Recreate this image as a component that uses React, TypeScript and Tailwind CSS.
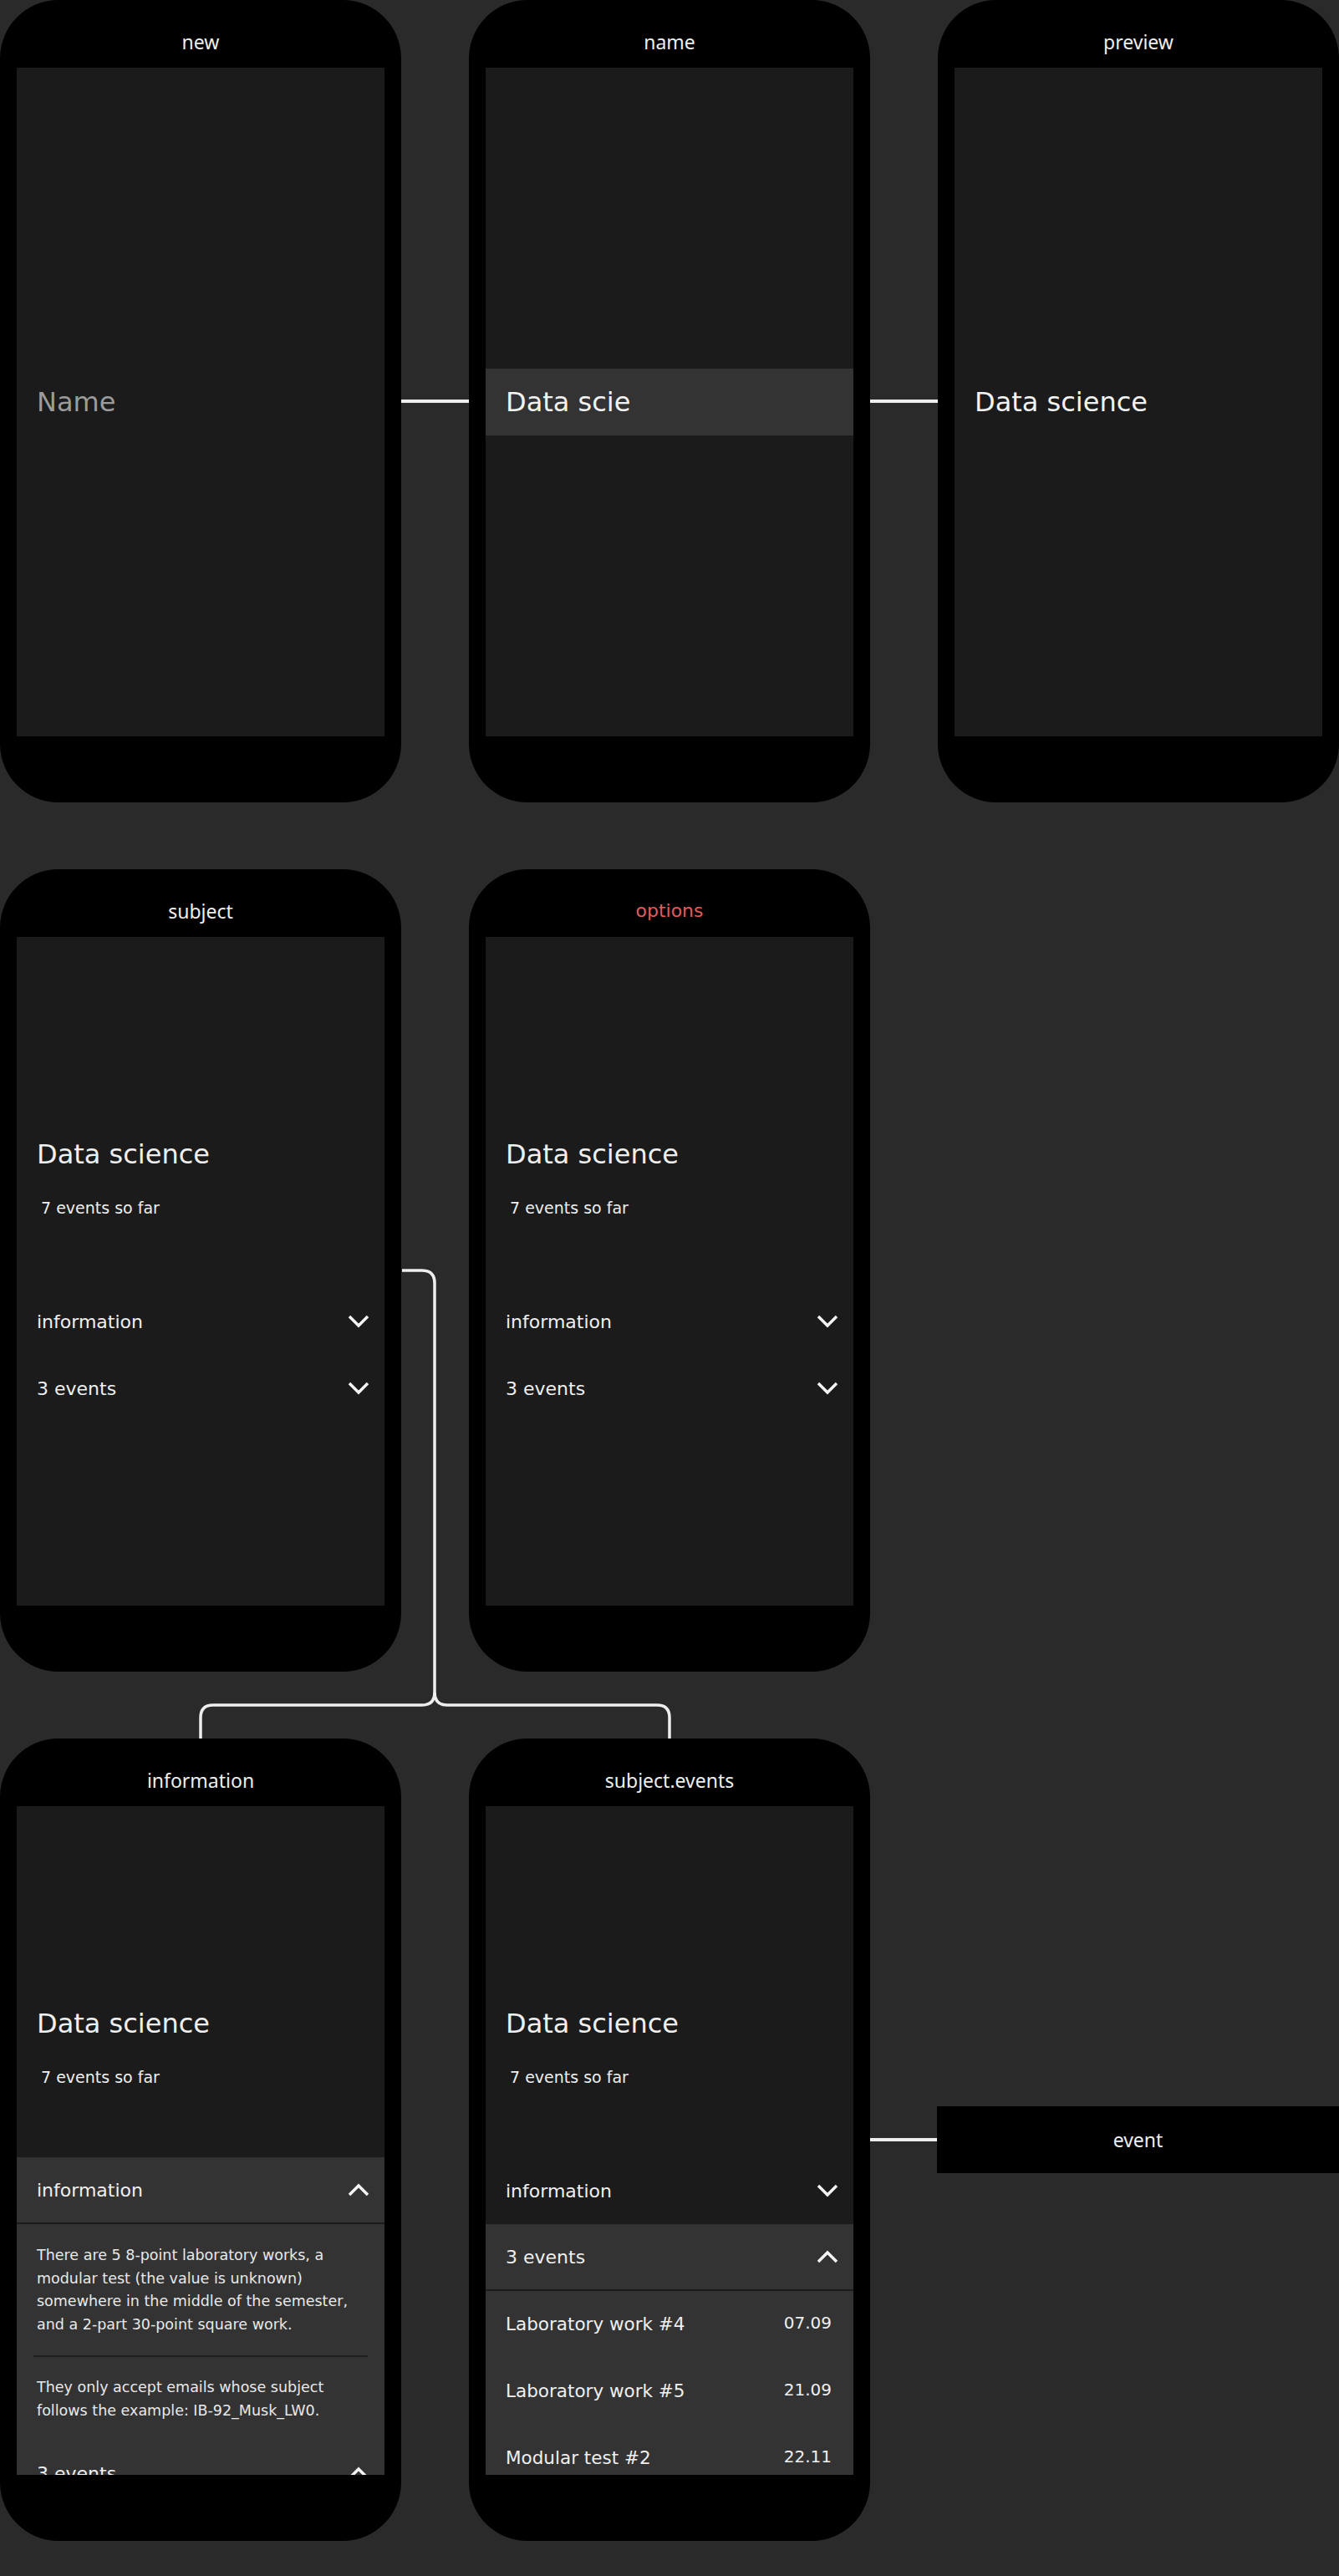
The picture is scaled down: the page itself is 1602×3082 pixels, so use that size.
import type { ReactNode } from "react";

// Montserrat-like content font and a system-like chrome font
const MONT = "font-['DejaVu_Sans','Liberation_Sans',sans-serif]";
const UI = "font-['Noto_Sans','Open_Sans',sans-serif]";

function Chevron({ up = false }: { up?: boolean }) {
  return (
    <svg width="26" height="16" viewBox="0 0 26 16" fill="none" className="shrink-0">
      <polyline
        points={up ? "2,14 13,3 24,14" : "2,2 13,13 24,2"}
        stroke="#f4f4f4"
        strokeWidth="3.5"
      />
    </svg>
  );
}

function Phone({ title, red, children }: { title: string; red?: boolean; children?: ReactNode }) {
  return (
    <div className="flex h-[960px] w-[480px] shrink-0 flex-col rounded-[70px] bg-black">
      {red ? (
        <div className={"h-[81px] pt-[35px] text-center text-[22px] leading-[30px] text-[#e35b5b] " + MONT}>
          {title}
        </div>
      ) : (
        <div className={"h-[81px] pt-[34px] text-center text-[23px] leading-[32px] text-[#eeeeee] " + UI}>
          {title}
        </div>
      )}
      <div className="mx-[20px] h-[800px] overflow-hidden bg-[#1b1b1b]">{children}</div>
    </div>
  );
}

function AccHeader({ label, open }: { label: string; open?: boolean }) {
  return (
    <div
      className={
        "flex h-[80px] items-center justify-between pl-6 pr-[18px] text-[22px] " +
        (open ? "border-b-2 border-[#1c1c1c] bg-[#333333]" : "")
      }
    >
      <span>{label}</span>
      <Chevron up={open} />
    </div>
  );
}

function InfoBody() {
  return (
    <div className="whitespace-nowrap bg-[#333333] px-6 pb-[22px] pt-6 text-[17.5px] leading-[27.5px] text-[#e8e8e8]">
      <p>
        There are 5 8-point laboratory works, a<br />
        modular test (the value is unknown)<br />
        somewhere in the middle of the semester,<br />
        and a 2-part 30-point square work.
      </p>
      <div className="-mx-1 my-[23px] h-[2px] bg-[#1f1f1f]" />
      <p>
        They only accept emails whose subject<br />
        follows the example: IB-92_Musk_LW0.
      </p>
    </div>
  );
}

const events = [
  { name: "Laboratory work #4", date: "07.09" },
  { name: "Laboratory work #5", date: "21.09" },
  { name: "Modular test #2", date: "22.11" },
];

function EventList() {
  return (
    <div className="bg-[#333333]">
      {events.map((ev) => (
        <div key={ev.name} className="flex h-[80px] items-center justify-between pl-6 pr-[26px] text-[21.5px]">
          <span>{ev.name}</span>
          <span className="pb-[4px] text-[20px]">{ev.date}</span>
        </div>
      ))}
    </div>
  );
}

function SubjectScreen({ open }: { open?: "info" | "events" }) {
  return (
    <div className={"flex flex-col pt-[240px] text-[#efefef] " + MONT}>
      <div className="px-6 text-[32px] leading-[40px]">Data science</div>
      <div className="mt-[32px] px-[29px] text-[19px] leading-[24px]">7 events so far</div>
      <div className="mt-[84px]">
        <AccHeader label="information" open={open === "info"} />
        {open === "info" && <InfoBody />}
        <AccHeader label="3 events" open={open === "info" || open === "events"} />
        {open === "events" && <EventList />}
      </div>
    </div>
  );
}

function Link() {
  return <div className="h-[4px] w-[81px] shrink-0 bg-[#eeeeee]" />;
}

export default function App() {
  return (
    <div className="relative min-h-[3082px] w-[1602px] bg-[#2a2a2a]">
      <div className="flex flex-col gap-[80px]">
        {/* row 1 — naming flow */}
        <div className="flex items-center">
          <Phone title="new">
            <div className={"flex h-full items-center px-6 text-[32px] text-[#9b9b9b] " + MONT}>Name</div>
          </Phone>
          <Link />
          <Phone title="name">
            <div className="flex h-full items-center">
              <div className={"flex h-[80px] w-full items-center bg-[#333333] px-6 text-[32px] text-[#f2f2f2] " + MONT}>
                Data scie
              </div>
            </div>
          </Phone>
          <Link />
          <Phone title="preview">
            <div className={"flex h-full items-center px-6 text-[32px] text-[#f2f2f2] " + MONT}>Data science</div>
          </Phone>
        </div>

        {/* row 2 — subject */}
        <div className="flex items-center">
          <Phone title="subject">
            <SubjectScreen />
          </Phone>
          <div className="w-[81px] shrink-0" />
          <Phone title="options" red>
            <SubjectScreen />
          </Phone>
        </div>

        {/* row 3 — expanded sections */}
        <div className="flex items-center">
          <Phone title="information">
            <SubjectScreen open="info" />
          </Phone>
          <div className="w-[81px] shrink-0" />
          <Phone title="subject.events">
            <SubjectScreen open="events" />
          </Phone>
          <div className="h-[4px] w-[80px] shrink-0 bg-[#eeeeee]" />
          <div className={"flex h-[80px] w-[481px] shrink-0 items-center justify-center bg-black text-[23px] text-[#eeeeee] " + UI}>
            event
          </div>
        </div>
      </div>

      {/* bracket connector subject -> information / subject.events */}
      <svg
        className="pointer-events-none absolute left-0 top-0"
        width="1602"
        height="3082"
        viewBox="0 0 1602 3082"
        fill="none"
      >
        <path
          d="M481 1520 H505 Q520 1520 520 1535 V2025 Q520 2040 505 2040 H255 Q240 2040 240 2055 V2080"
          stroke="#eeeeee"
          strokeWidth="3.5"
        />
        <path d="M520 2025 Q520 2040 535 2040 H786 Q801 2040 801 2055 V2080" stroke="#eeeeee" strokeWidth="3.5" />
      </svg>
    </div>
  );
}
